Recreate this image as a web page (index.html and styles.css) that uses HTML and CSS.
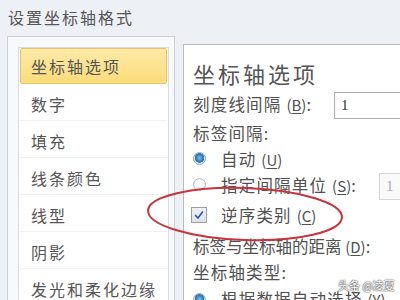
FILE: index.html
```html
<!DOCTYPE html>
<html lang="zh-CN">
<head>
<meta charset="utf-8">
<title>设置坐标轴格式</title>
<link rel="stylesheet" href="styles.css">
</head>
<body>
<div class="dialog">
  <div class="title">设置坐标轴格式</div>
  <div class="main">
    <div class="nav-frame">
      <ul class="nav">
        <li class="nav-item active">坐标轴选项</li>
        <li class="nav-item">数字</li>
        <li class="nav-item">填充</li>
        <li class="nav-item">线条颜色</li>
        <li class="nav-item">线型</li>
        <li class="nav-item">阴影</li>
        <li class="nav-item">发光和柔化边缘</li>
      </ul>
    </div>
    <div class="pane">
      <div class="pane-title">坐标轴选项</div>
      <div class="row r1">
        <span class="label w-tick">刻度线间隔 <span class="key">(<u>B</u>)</span>:</span>
        <span class="input">1</span>
      </div>
      <div class="row r2"><span class="label">标签间隔:</span></div>
      <div class="row r3">
        <span class="radio checked"></span>
        <span class="label">自动 <span class="key">(<u>U</u>)</span></span>
      </div>
      <div class="row r4">
        <span class="radio"></span>
        <span class="label w-spec">指定间隔单位 <span class="key">(<u>S</u>)</span>:</span>
        <span class="input disabled">1</span>
      </div>
      <div class="row r5">
        <span class="checkbox"><svg viewBox="0 0 16 16" width="16" height="16"><path d="M4 8.5 L6.8 11.5 L12 4.5" fill="none" stroke="#3556a6" stroke-width="1.8" stroke-linecap="round" stroke-linejoin="round"/></svg></span>
        <span class="label">逆序类别 <span class="key">(<u>C</u>)</span></span>
      </div>
      <div class="row r6"><span class="label tight">标签与坐标轴的距离 <span class="key">(<u>D</u>)</span>:</span></div>
      <div class="row r7"><span class="label">坐标轴类型:</span></div>
      <div class="row r8">
        <span class="radio checked"></span>
        <span class="label">根据数据自动选择 <span class="key">(<u>Y</u>)</span></span>
      </div>
    </div>
  </div>
  <svg class="mark" viewBox="0 0 220 70" width="220" height="70">
    <ellipse cx="105" cy="34" rx="97" ry="26" transform="rotate(2 105 34)" fill="none" stroke="#c9333b" stroke-width="2"/>
  </svg>
  <div class="watermark">头条 @凌夏</div>
</div>
</body>
</html>
```
FILE: styles.css
```css
html, body {
  margin: 0;
  padding: 0;
  width: 400px;
  height: 300px;
  overflow: hidden;
  background: #edf0f4;
  font-family: "Noto Sans CJK SC", "Noto Sans", sans-serif;
  color: #555;
}

.dialog {
  position: relative;
  width: 400px;
  height: 300px;
}

.title {
  height: 36px;
  line-height: 35px;
  padding-left: 8px;
  font-size: 16px;
  letter-spacing: 2px;
  color: #555;
}

.main {
  display: flex;
  align-items: flex-start;
  padding-left: 7px;
  gap: 8px;
}

.nav-frame {
  border: 1px solid #cdd1d6;
  border-bottom: none;
  background: #f8f9fb;
  padding: 10px 5px 0 10px;
  height: 280px;
}

.nav {
  list-style: none;
  margin: 0;
  padding: 0 1px;
  width: 147px;
  height: 280px;
  border: 1px solid #d9dce0;
  background: #fff;
}

.nav-item {
  height: 37px;
  line-height: 41px;
  padding-left: 11px;
  font-size: 16px;
  letter-spacing: 2px;
  color: #555;
  border-bottom: 1px solid #f0f1f3;
  box-sizing: border-box;
}

.nav-item.active {
  height: 36px;
  line-height: 34px;
  border: 1px solid #e6c46a;
  border-radius: 2px;
  background: linear-gradient(#fdeaa8, #fbdc7a);
  padding-left: 10px;
}

.pane {
  flex: 1;
  margin-top: 8px;
  height: 280px;
  border: 1px solid #b7bbc1;
  border-right: none;
  border-bottom: none;
  background: #fff;
  padding: 13px 0 0 9px;
}

.pane-title {
  height: 30px;
  line-height: 30px;
  font-size: 22px;
  letter-spacing: 3px;
  color: #555;
}

.row {
  display: flex;
  align-items: center;
  white-space: nowrap;
}
.r1 { height: 32px; }
.r2 { height: 26px; }
.r3 { height: 25px; }
.r4 { height: 27px; }
.r5 { height: 34px; }
.r6 { height: 28px; }
.r7 { height: 24px; }
.r8 { height: 30px; }

.label {
  font-size: 16.5px;
  letter-spacing: 1.2px;
  color: #505050;
}
.label.tight { letter-spacing: 0; }
.key {
  font-size: 15px;
  letter-spacing: 0;
}
.key u { text-underline-offset: 2px; }

.w-tick { width: 141px; flex: none; }
.w-spec { width: 158px; flex: none; }

.input {
  flex: none;
  width: 80px;
  height: 27px;
  box-sizing: border-box;
  border: 1px solid #abaeb4;
  background: #fff;
  font-family: "Liberation Serif", serif;
  font-size: 15px;
  line-height: 25px;
  padding-left: 6px;
  color: #333;
  margin-top: 2px;
}
.input.disabled {
  width: 40px;
  border-color: #d4d6d9;
  color: #aaa;
  background: #fafafa;
  margin-top: 4px;
}

.radio {
  flex: none;
  width: 13px;
  height: 13px;
  box-sizing: border-box;
  border-radius: 50%;
  border: 1px solid #b8bcc2;
  background: radial-gradient(circle at 50% 40%, #fff, #e9ebee);
  margin-right: 15px;
}
.radio.checked {
  border-color: #8fa7c0;
  background: radial-gradient(circle at 50% 45%, #7ec1ea 0, #2f80bd 3.5px, #2a6fa6 4.5px, #dfe7ef 5px);
}

.checkbox {
  flex: none;
  width: 16px;
  height: 16px;
  box-sizing: border-box;
  border: 1px solid #9aa0a8;
  background: linear-gradient(#eef0f3, #dfe3e8);
  margin-left: -2px;
  margin-right: 14px;
  display: flex;
  align-items: center;
  justify-content: center;
}
.checkbox svg { width: 14px; height: 14px; }

.mark {
  position: absolute;
  left: 140px;
  top: 180px;
}

.watermark {
  position: absolute;
  left: 338px;
  top: 277px;
  font-size: 11px;
  color: #fff;
  text-shadow: 0 0 2px #333, 0 0 1px #333;
  white-space: nowrap;
}
```
